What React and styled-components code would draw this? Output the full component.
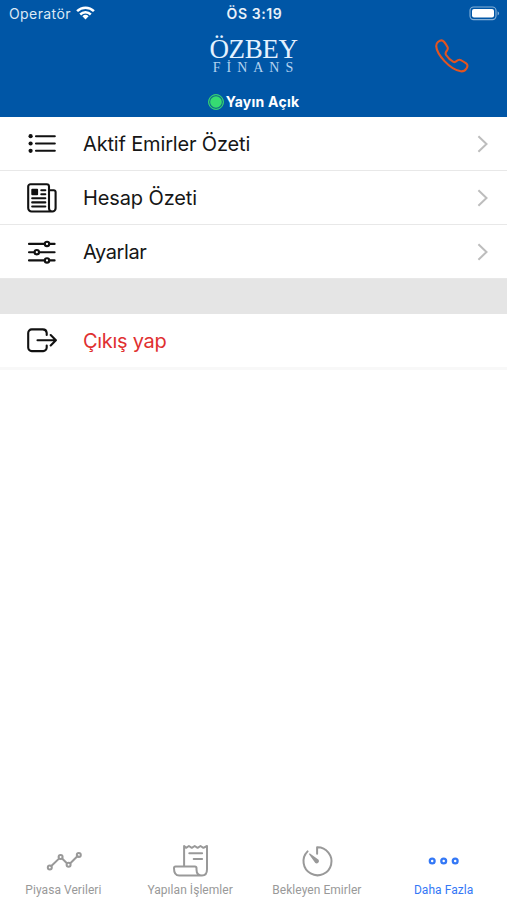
import React from 'react'
import styled, { createGlobalStyle } from 'styled-components'

const GlobalStyle = createGlobalStyle`
  * {
    box-sizing: border-box;
  }
  body {
    margin: 0;
    background: #ffffff;
    font-family: Inter, 'Liberation Sans', sans-serif;
  }
`

const ListIcon = () => (
  <Icon width="30" height="30" viewBox="0 0 30 30">
    <path d="M9 7.2H27.8M9 14.5H27.8M9 21.8H27.8" />
    <g fill="currentColor" stroke="none">
      <circle cx="3.6" cy="7.2" r="2.1" />
      <circle cx="3.6" cy="14.5" r="2.1" />
      <circle cx="3.6" cy="21.8" r="2.1" />
    </g>
  </Icon>
)

const NewsIcon = () => (
  <Icon width="30" height="30" viewBox="0 0 30 30">
    <path d="M25.2 28.5H4.6a3.4 3.4 0 0 1-3.4-3.4V3.5a2.3 2.3 0 0 1 2.3-2.3h16.2A2.3 2.3 0 0 1 22 3.5v21.7a3.3 3.3 0 0 0 3.3 3.3 3.3 3.3 0 0 0 3.3-3.3V9a1.8 1.8 0 0 0-1.8-1.8H22" />
    <path d="M14.3 7.2h4M14.3 11.2h4M5.2 15.3h13.1M5.2 19.4h13.1M5.2 23.5h13.1" />
    <rect x="4.3" y="5.8" width="6.8" height="6.4" rx="1" fill="currentColor" stroke="none" />
  </Icon>
)

const OptionsIcon = () => (
  <Icon width="30" height="30" viewBox="0 0 30 30">
    <path d="M22.4 6.9h5.2M2 6.9h15.6M22.4 23.4h5.2M2 23.4h15.6M12.2 15.2h15.4M2 15.2h5.4" />
    <circle cx="20" cy="6.9" r="2.2" />
    <circle cx="9.8" cy="15.2" r="2.2" />
    <circle cx="20" cy="23.4" r="2.2" />
  </Icon>
)

const ExitIcon = () => (
  <Icon width="30" height="30" viewBox="0 0 30 30">
    <path d="M19.7 19.5v2.1a3.5 3.5 0 0 1-3.5 3.5H4.7a3.5 3.5 0 0 1-3.5-3.5V6.9a3.5 3.5 0 0 1 3.5-3.5h11.1a3.9 3.9 0 0 1 3.9 3.5v2" />
    <path d="M23.7 9l5.2 5.2-5.2 5.2M10.5 14.2h17.6" />
  </Icon>
)

const WifiIcon = () => (
  <svg width="19" height="14" viewBox="0 0 19 14" fill="none" stroke="#fff" strokeWidth="2.5">
    <path d="M1.1 5.2a12 12 0 0 1 16.8 0M4.2 8.5a7.6 7.6 0 0 1 10.6 0" />
    <path d="M9.5 13.4l-3.1-3.1a4.5 4.5 0 0 1 6.2 0z" fill="#fff" stroke="none" />
  </svg>
)

const BatteryIcon = () => (
  <svg width="31" height="15" viewBox="0 0 31 15">
    <rect x="1" y="1" width="26" height="12.6" rx="3.6" fill="none" stroke="#86b1d8" strokeWidth="1.1" />
    <rect x="3" y="3" width="22" height="8.6" rx="2" fill="#fff" />
    <path d="M28.6 5.2v4.2c2-.8 2-3.4 0-4.2z" fill="#86b1d8" />
  </svg>
)

const PhoneIcon = () => (
  <svg width="34" height="34" viewBox="0 0 34 34" fill="none" stroke="#e25420" strokeWidth="2.1" strokeLinejoin="round">
    <path d="M25.8 32.3c-5.7-.9-11.8-5.4-16.3-10.2C4.8 17.1 1.5 11.3 1.2 7.2c-.1-2 .7-3.3 2-4.4C5.2 1.2 7.3.8 9 2.8c1.4 1.6 2.5 3.4 3.5 5.2.7 1.4.4 2.4-.7 3.8-1.3 1.5-1.9 2.2-.7 4.2 2 3.1 4.5 5.4 7.3 6.9 1.3.7 2 .4 3.2-.8 1.6-1.5 2.6-1.8 4.2-1 1.9.9 3.7 2.1 5.4 3.3 1.7 1.2 1.6 3.4.2 5.2-1.3 1.9-3 3-5.6 2.7z" />
  </svg>
)

const Chevron = () => (
  <ChevronSvg width="12" height="18" viewBox="0 0 12 18">
    <path d="M1.4 1.3L9.5 9l-8.1 7.7" />
  </ChevronSvg>
)

const TrendIcon = () => (
  <TabIcon width="38" height="36" viewBox="0 0 38 36">
    <path d="M7.3 23L15 15.6M18.1 15.5l4.8 4.8M26.3 20.2l7.3-7.2" />
    <circle cx="5.8" cy="24.4" r="2" />
    <circle cx="16.6" cy="14" r="2" />
    <circle cx="24.6" cy="21.8" r="2" />
    <circle cx="34.8" cy="11.9" r="2" />
  </TabIcon>
)

const ReceiptIcon = () => (
  <TabIcon width="38" height="36" viewBox="0 0 38 36">
    <path d="M13.1 23.4V3l2 1.8L17.9 3l2.9 1.8L23.7 3l2.9 1.8L29.5 3l2.9 1.8L36 3v23.2c0 4-2 6.3-5 6.3-3.4 0-5.5-2.2-5.5-6v-1.4c0-1-.5-1.7-1.6-1.7H4.5c-1 0-1.5.7-1.5 1.8 0 4.8 1.6 7.3 5.2 7.3h22.9" />
    <path d="M18.3 10.2h12.8M22.7 15.9h8.4" />
  </TabIcon>
)

const TimerIcon = () => (
  <TabIcon width="38" height="36" viewBox="0 0 38 36">
    <path d="M19.1 10.8V4.3a14 14 0 1 1-9.5 4.1" />
    <path d="M17.3 20L11.2 11.4c-.4-.7.2-1.2.8-.8l8.6 6.1a2.4 2.4 0 0 1-3.3 3.3z" fill="currentColor" stroke="none" />
  </TabIcon>
)

const MoreIcon = () => (
  <TabIcon width="38" height="36" viewBox="0 0 38 36">
    <g strokeWidth="2.3">
      <circle cx="7.2" cy="18" r="2.4" />
      <circle cx="18.7" cy="18" r="2.4" />
      <circle cx="30.2" cy="18" r="2.4" />
    </g>
  </TabIcon>
)

const menu = [
  { id: 1, label: 'Aktif Emirler Özeti', spacing: '-0.16px', icon: <ListIcon /> },
  { id: 2, label: 'Hesap Özeti', spacing: '-0.12px', icon: <NewsIcon /> },
  { id: 3, label: 'Ayarlar', spacing: '-0.4px', icon: <OptionsIcon /> },
]

const tabs = [
  { id: 1, label: 'Piyasa Verileri', icon: <TrendIcon /> },
  { id: 2, label: 'Yapılan İşlemler', icon: <ReceiptIcon /> },
  { id: 3, label: 'Bekleyen Emirler', icon: <TimerIcon /> },
  { id: 4, label: 'Daha Fazla', icon: <MoreIcon />, active: true },
]

const App = () => {
  return (
    <Screen>
      <GlobalStyle />
      <Header>
        <StatusBar>
          <Carrier>
            <span>Operatör</span>
            <WifiIcon />
          </Carrier>
          <Clock>ÖS 3:19</Clock>
          <Battery>
            <BatteryIcon />
          </Battery>
        </StatusBar>
        <Brand>
          <Logo>
            <LogoName>ÖZBEY</LogoName>
            <LogoSub>FİNANS</LogoSub>
          </Logo>
          <CallButton aria-label="Ara">
            <PhoneIcon />
          </CallButton>
        </Brand>
        <Stream>
          <Dot />
          Yayın Açık
        </Stream>
      </Header>
      <Menu>
        {menu.map(item => (
          <Row key={item.id}>
            {item.icon}
            <Label $spacing={item.spacing}>{item.label}</Label>
            <Chevron />
          </Row>
        ))}
        <Divider />
        <Row $last>
          <ExitIcon />
          <Label $danger $spacing="-0.3px">
            Çıkış yap
          </Label>
        </Row>
      </Menu>
      <TabBar>
        {tabs.map(tab => (
          <Tab key={tab.id} $active={tab.active}>
            {tab.icon}
            <span>{tab.label}</span>
          </Tab>
        ))}
      </TabBar>
    </Screen>
  )
}

const Screen = styled.div`
  display: flex;
  flex-direction: column;
  width: 507px;
  height: 900px;
  background: #ffffff;
  overflow: hidden;
`

const Header = styled.header`
  height: 117px;
  flex: none;
  background: #0056a6;
  color: #ffffff;
`

const StatusBar = styled.div`
  display: grid;
  grid-template-columns: 1fr auto 1fr;
  align-items: center;
  height: 27px;
  padding: 0 7px 0 9px;
`

const Carrier = styled.div`
  display: flex;
  align-items: center;
  gap: 5px;
  font-size: 14px;
  letter-spacing: 0.4px;
  color: #dce9f5;
  svg {
    margin-top: -2px;
  }
`

const Clock = styled.div`
  font-size: 14px;
  font-weight: 600;
  letter-spacing: 0.6px;
  color: #e9f1f9;
`

const Battery = styled.div`
  display: flex;
  justify-content: flex-end;
`

const Brand = styled.div`
  display: grid;
  grid-template-columns: 1fr auto 1fr;
  height: 61px;
  padding: 0 38px;
`

const Logo = styled.div`
  grid-column: 2;
  display: flex;
  flex-direction: column;
  align-items: center;
  padding-top: 10px;
  font-family: 'Liberation Serif', serif;
  color: #e4f2ff;
`

const LogoName = styled.div`
  font-size: 27px;
  line-height: 24px;
  letter-spacing: -0.4px;
`

const LogoSub = styled.div`
  padding-left: 5px;
  font-size: 14px;
  line-height: 14px;
  letter-spacing: 6px;
  color: #b4d3f0;
`

const CallButton = styled.button`
  justify-self: end;
  align-self: start;
  margin-top: 12px;
  padding: 0;
  border: none;
  background: none;
  svg {
    display: block;
  }
`

const Stream = styled.div`
  display: flex;
  align-items: center;
  justify-content: center;
  gap: 2px;
  height: 27px;
  font-size: 14px;
  font-weight: 700;
  letter-spacing: 0.25px;
`

const Dot = styled.span`
  width: 16px;
  height: 16px;
  border-radius: 50%;
  border: 1px solid #35cf75;
  background: #36dc72;
  box-shadow: inset 0 0 0 1.2px #127285;
`

const Menu = styled.main`
  flex: 1;
`

const Row = styled.div`
  display: flex;
  align-items: center;
  height: ${props => (props.$last ? '56px' : '54px')};
  padding: 0 17px 0 27px;
  border-bottom: ${props => (props.$last ? '3px solid #f8f8f8' : '1px solid #e8e8e8')};
`

const Label = styled.span`
  flex: 1;
  margin-left: 26px;
  font-size: 20px;
  letter-spacing: ${props => props.$spacing};
  white-space: nowrap;
  color: ${props => (props.$danger ? '#df3030' : '#161616')};
`

const Divider = styled.div`
  height: 35px;
  background: #e5e5e5;
`

const TabBar = styled.nav`
  display: grid;
  grid-template-columns: repeat(4, 1fr);
  height: 60px;
`

const Tab = styled.div`
  display: flex;
  flex-direction: column;
  align-items: center;
  padding-top: 3px;
  color: ${props => (props.$active ? '#3478f6' : '#999999')};
  span {
    margin-top: 4px;
    font-family: Roboto, sans-serif;
    font-size: 12px;
    line-height: 14px;
    letter-spacing: 0.05px;
    white-space: nowrap;
  }
`

const Icon = styled.svg`
  flex: none;
  fill: none;
  stroke: currentColor;
  stroke-width: 2.1;
  stroke-linecap: round;
  stroke-linejoin: round;
  color: #111111;
`

const TabIcon = styled.svg`
  flex: none;
  fill: none;
  stroke: currentColor;
  stroke-width: 2;
  stroke-linecap: round;
  stroke-linejoin: round;
`

const ChevronSvg = styled.svg`
  fill: none;
  stroke: #bdbdbd;
  stroke-width: 2;
  margin-right: 1px;
`

export default App
